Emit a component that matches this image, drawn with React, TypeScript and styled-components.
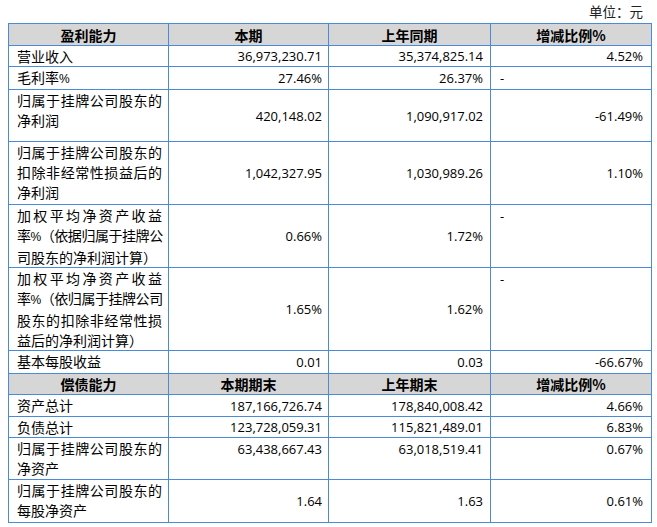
import React from "react";
import styled, { createGlobalStyle } from "styled-components";

const Global = createGlobalStyle`
  html, body { margin: 0; padding: 0; background: #ffffff; }
  body { font-family: "Noto Sans CJK SC", sans-serif; color: #000; }
`;

const Page = styled.div`
  width: 657px;
  padding: 0 6px 0 8px;
  box-sizing: border-box;
`;

const Unit = styled.div`
  height: 23px;
  display: flex;
  align-items: center;
  justify-content: flex-end;
  padding-right: 8px;
  font-family: "Noto Sans CJK SC", sans-serif;
  font-size: 13.5px;
  color: #222;
  line-height: 23px;
`;

const Table = styled.table`
  width: 643px;
  border-collapse: collapse;
  table-layout: fixed;
  border: 1px solid #4a8ad6;
`;

const Row = styled.tr<{ $h: number }>`
  height: ${(p) => p.$h}px;
`;

const Head = styled.th`
  background: #d6d6d6;
  border: 1px solid #4a8ad6;
  font-family: "Noto Sans CJK SC", sans-serif;
  font-weight: 700;
  font-size: 14px;
  text-align: center;
  padding: 0;
  line-height: 20px;
`;

const Label = styled.td`
  border: 1px solid #4a8ad6;
  padding: 0 6px 0 8px;
  vertical-align: top;
  font-family: "Noto Sans CJK SC", sans-serif;
  font-size: 14px;
  line-height: 20px;
`;

const Line = styled.div<{ $justify?: boolean; $tight?: boolean }>`
  text-align: ${(p) => (p.$justify ? "justify" : "left")};
  text-align-last: ${(p) => (p.$justify ? "justify" : "left")};
  letter-spacing: ${(p) => (p.$tight ? "-0.45px" : "0")};
  white-space: nowrap;
`;

const Pct = styled.span`
  font-family: "Liberation Sans", sans-serif;
  font-size: 12px;
  letter-spacing: -0.5px;
`;

const Num = styled.td<{ $top?: boolean; $pr: number }>`
  border: 1px solid #4a8ad6;
  padding: ${(p) => (p.$top ? "1px" : "0")} ${(p) => p.$pr}px 0 0;
  vertical-align: ${(p) => (p.$top ? "top" : "middle")};
  text-align: right;
  font-family: "Open Sans", sans-serif;
  font-size: 13px;
  line-height: 20px;
`;

const Dash = styled.td<{ $top?: boolean }>`
  border: 1px solid #4a8ad6;
  padding: ${(p) => (p.$top ? "1px" : "0")} 0 0 9px;
  vertical-align: ${(p) => (p.$top ? "top" : "middle")};
  text-align: left;
  font-family: "Open Sans", sans-serif;
  font-size: 13px;
  line-height: 20px;
`;

type RowData = {
  h: number;
  lines: string[];
  justified?: number;
  a: string;
  b: string;
  c: string;
  top?: boolean;
  dashTop?: boolean;
};

const profit: RowData[] = [
  { h: 21, lines: ["营业收入"], a: "36,973,230.71", b: "35,374,825.14", c: "4.52%" },
  { h: 22, lines: ["毛利率%"], a: "27.46%", b: "26.37%", c: "-" },
  { h: 52, lines: ["归属于挂牌公司股东的", "净利润"], justified: 1, a: "420,148.02", b: "1,090,917.02", c: "-61.49%" },
  { h: 63, lines: ["归属于挂牌公司股东的", "扣除非经常性损益后的", "净利润"], justified: 2, a: "1,042,327.95", b: "1,030,989.26", c: "1.10%" },
  { h: 63, lines: ["加权平均净资产收益", "率%（依据归属于挂牌公", "司股东的净利润计算）"], justified: 2, a: "0.66%", b: "1.72%", c: "-", dashTop: true },
  { h: 83, lines: ["加权平均净资产收益", "率%（依归属于挂牌公司", "股东的扣除非经常性损", "益后的净利润计算）"], justified: 3, a: "1.65%", b: "1.62%", c: "-", dashTop: true },
  { h: 23, lines: ["基本每股收益"], a: "0.01", b: "0.03", c: "-66.67%" },
];

const debt: RowData[] = [
  { h: 22, lines: ["资产总计"], a: "187,166,726.74", b: "178,840,008.42", c: "4.66%" },
  { h: 21, lines: ["负债总计"], a: "123,728,059.31", b: "115,821,489.01", c: "6.83%" },
  { h: 42, lines: ["归属于挂牌公司股东的", "净资产"], justified: 1, a: "63,438,667.43", b: "63,018,519.41", c: "0.67%", top: true },
  { h: 43, lines: ["归属于挂牌公司股东的", "每股净资产"], justified: 1, a: "1.64", b: "1.63", c: "0.61%" },
];

const renderLine = (l: string) => {
  const parts = l.split("%");
  return parts.map((p, i) => (
    <React.Fragment key={i}>
      {p}
      {i < parts.length - 1 && <Pct>%</Pct>}
    </React.Fragment>
  ));
};

const DataRow = ({ r }: { r: RowData }) => (
  <Row $h={r.h}>
    <Label>
      {r.lines.map((l, i) => (
        <Line key={i} $justify={i < (r.justified ?? 0)} $tight={l.includes("（")}>
          {renderLine(l)}
        </Line>
      ))}
    </Label>
    <Num $top={r.top} $pr={6}>{r.a}</Num>
    <Num $top={r.top} $pr={7}>{r.b}</Num>
    {r.c === "-" ? (
      <Dash $top={r.dashTop}>-</Dash>
    ) : (
      <Num $top={r.top} $pr={8}>{r.c}</Num>
    )}
  </Row>
);

export default function App() {
  return (
    <Page>
      <Global />
      <Unit>单位：元</Unit>
      <Table>
        <colgroup>
          <col style={{ width: 160 }} />
          <col style={{ width: 160 }} />
          <col style={{ width: 162 }} />
          <col style={{ width: 161 }} />
        </colgroup>
        <tbody>
          <Row $h={22}>
            <Head>盈利能力</Head>
            <Head>本期</Head>
            <Head>上年同期</Head>
            <Head>增减比例%</Head>
          </Row>
          {profit.map((r, i) => (
            <DataRow key={"p" + i} r={r} />
          ))}
          <Row $h={21}>
            <Head>偿债能力</Head>
            <Head>本期期末</Head>
            <Head>上年期末</Head>
            <Head>增减比例%</Head>
          </Row>
          {debt.map((r, i) => (
            <DataRow key={"d" + i} r={r} />
          ))}
        </tbody>
      </Table>
    </Page>
  );
}
